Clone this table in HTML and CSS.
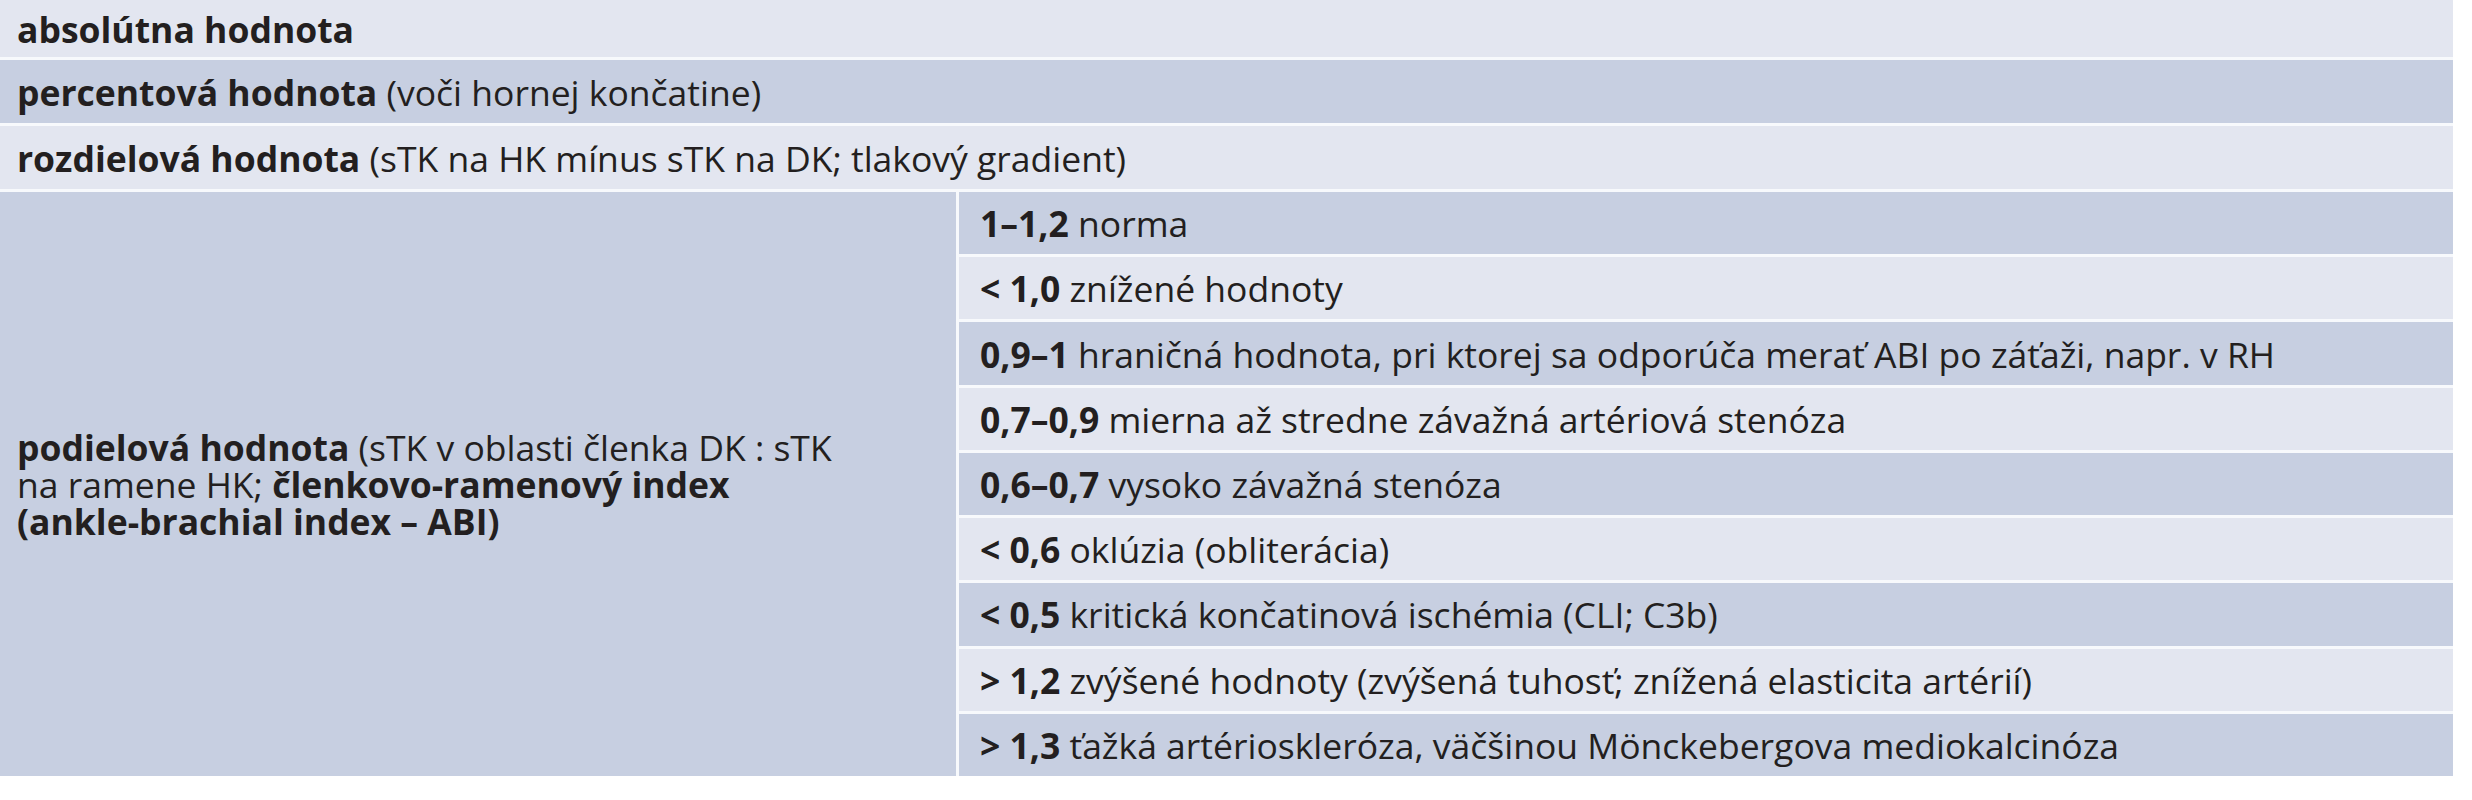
FILE: index.html
```html
<!DOCTYPE html>
<html lang="sk">
<head>
<meta charset="utf-8">
<title>ABI</title>
<link rel="stylesheet" href="styles.css">
</head>
<body>
<div class="tbl">
  <div class="row light first"><b>absolútna hodnota</b></div>
  <div class="row dark"><span><b>percentová hodnota</b> (voči hornej končatine)</span></div>
  <div class="row light"><span><b>rozdielová hodnota</b> (sTK na HK mínus sTK na DK; tlakový gradient)</span></div>
  <div class="split">
    <div class="lead dark">
      <div class="lead-text">
        <span class="ln"><b>podielová hodnota</b> (sTK v oblasti členka DK : sTK</span>
        <span class="ln">na ramene HK; <b>členkovo-ramenový index</b></span>
        <span class="ln"><b>(ankle-brachial index – ABI)</b></span>
      </div>
    </div>
    <div class="subs">
      <div class="sub dark"><span><b>1–1,2</b> norma</span></div>
      <div class="sub light"><span><b>&lt; 1,0</b> znížené hodnoty</span></div>
      <div class="sub dark"><span><b>0,9–1</b> hraničná hodnota, pri ktorej sa odporúča merať ABI po záťaži, napr. v RH</span></div>
      <div class="sub light"><span><b>0,7–0,9</b> mierna až stredne závažná artériová stenóza</span></div>
      <div class="sub dark"><span><b>0,6–0,7</b> vysoko závažná stenóza</span></div>
      <div class="sub light"><span><b>&lt; 0,6</b> oklúzia (obliterácia)</span></div>
      <div class="sub dark"><span><b>&lt; 0,5</b> kritická končatinová ischémia (CLI; C3b)</span></div>
      <div class="sub light"><span><b>&gt; 1,2</b> zvýšené hodnoty (zvýšená tuhosť; znížená elasticita artérií)</span></div>
      <div class="sub dark"><span><b>&gt; 1,3</b> ťažká artérioskleróza, väčšinou Mönckebergova mediokalcinóza</span></div>
    </div>
  </div>
</div>
</body>
</html>
```
FILE: styles.css
```css
html, body {
  margin: 0;
  padding: 0;
  background: #ffffff;
}
body {
  font-family: "Open Sans", "Noto Sans", sans-serif;
  font-size: 35.5px;
  color: #231f20;
}
b { font-weight: 700; }
.tbl {
  width: 2453px;
  display: flex;
  flex-direction: column;
  gap: 3px;
  background: #f7f9fc;
}
.light { background: #e3e6f0; }
.dark { background: #c7cfe1; }
.row {
  height: 63px;
  display: flex;
  align-items: center;
  padding-left: 17px;
  white-space: nowrap;
}
.row.first { height: 57px; }
.split {
  height: 584px;
  display: grid;
  grid-template-columns: 956px 1fr;
  column-gap: 3px;
}
.lead {
  display: flex;
  align-items: center;
  padding-left: 17px;
}
.lead-text {
  display: flex;
  flex-direction: column;
}
.ln {
  display: block;
  height: 37px;
  line-height: 37px;
  white-space: nowrap;
}
.subs {
  display: grid;
  grid-template-rows: repeat(9, 1fr);
  row-gap: 3px;
}
.sub {
  display: flex;
  align-items: center;
  padding-left: 21px;
  white-space: nowrap;
}
```
